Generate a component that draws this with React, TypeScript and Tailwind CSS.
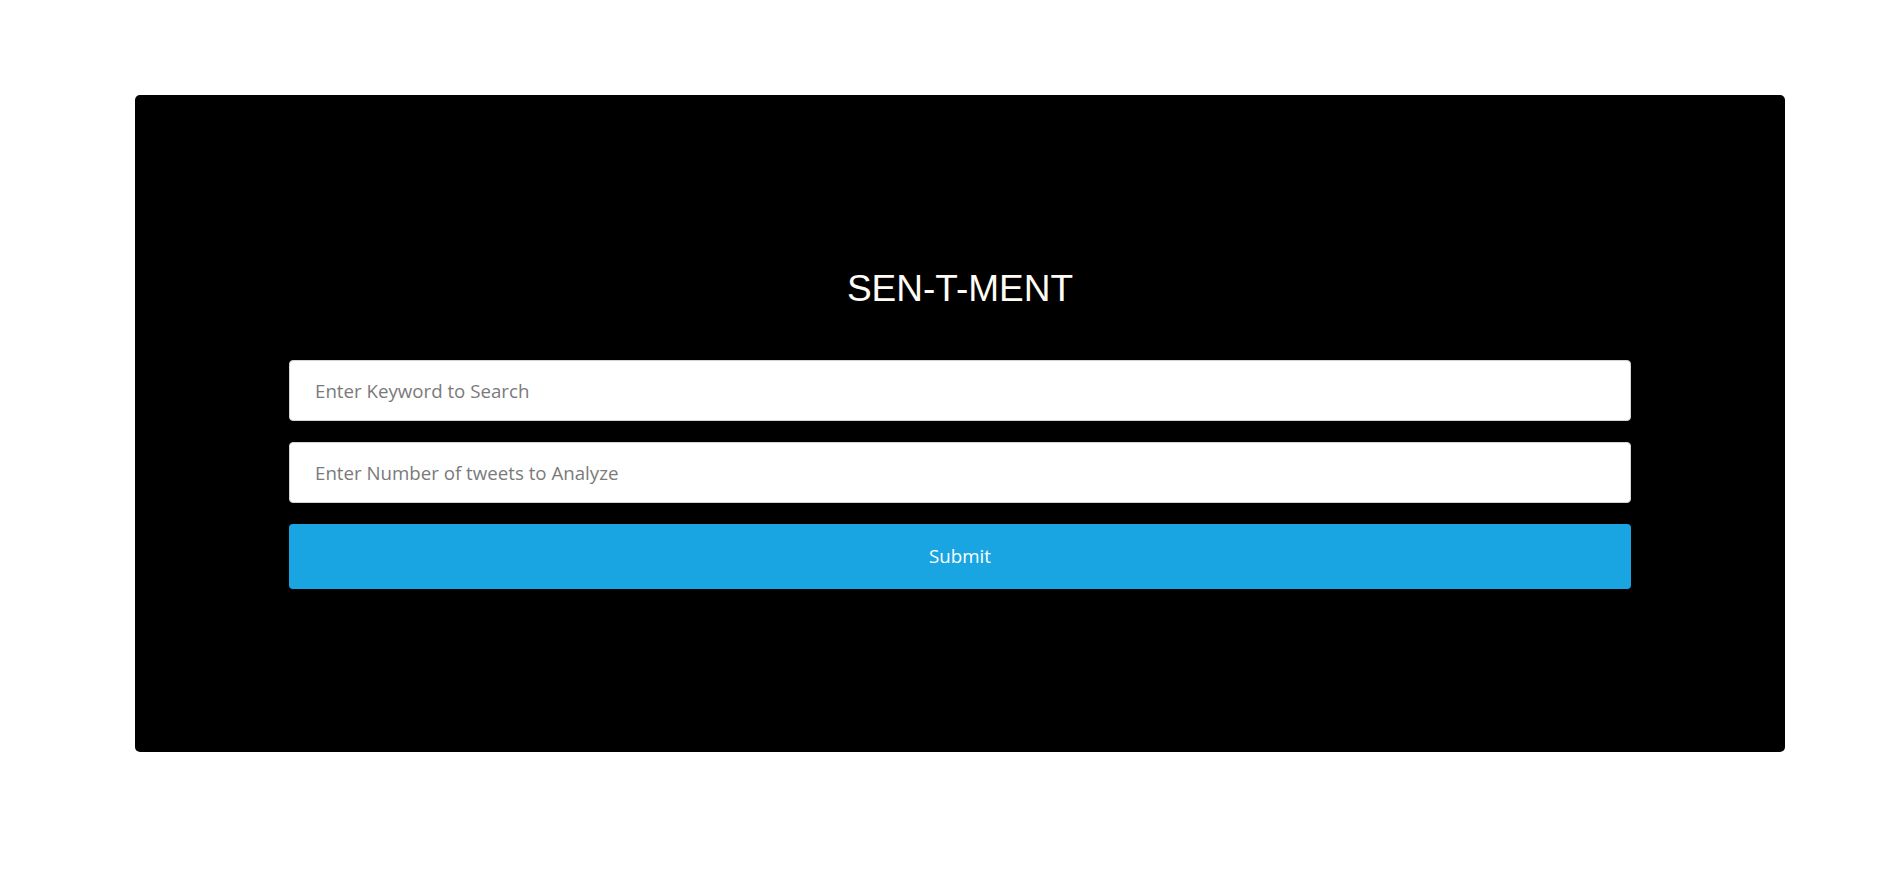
export default function App() {
  return (
    <div className="min-h-[896px] w-full bg-white pt-[95px]">
      <div className="ml-[135px] flex h-[657px] w-[1650px] flex-col rounded-[5px] bg-black px-[154px] pt-[172px]">
        <h1 className="h-[44px] text-center font-['Liberation_Sans',Arial,sans-serif] text-[37px] leading-[44px] text-[#fffdf5]">
          SEN-T-MENT
        </h1>
        <form className="mt-[49px] flex flex-col">
          <input
            type="text"
            placeholder="Enter Keyword to Search"
            className="h-[61px] w-full rounded-[4px] border border-[#ced4da] bg-white px-[25px] font-['Open_Sans',sans-serif] text-[18.7px] text-[#495057] outline-none placeholder:text-[#7a7a7a]"
          />
          <input
            type="text"
            placeholder="Enter Number of tweets to Analyze"
            className="mt-[21px] h-[61px] w-full rounded-[4px] border border-[#ced4da] bg-white px-[25px] font-['Open_Sans',sans-serif] text-[18.7px] text-[#495057] outline-none placeholder:text-[#7a7a7a]"
          />
          <button
            type="button"
            className="mt-[21px] h-[65px] w-full rounded-[4px] bg-[#19a5e1] font-['Open_Sans',sans-serif] text-[18.7px] text-white"
          >
            Submit
          </button>
        </form>
      </div>
    </div>
  );
}
